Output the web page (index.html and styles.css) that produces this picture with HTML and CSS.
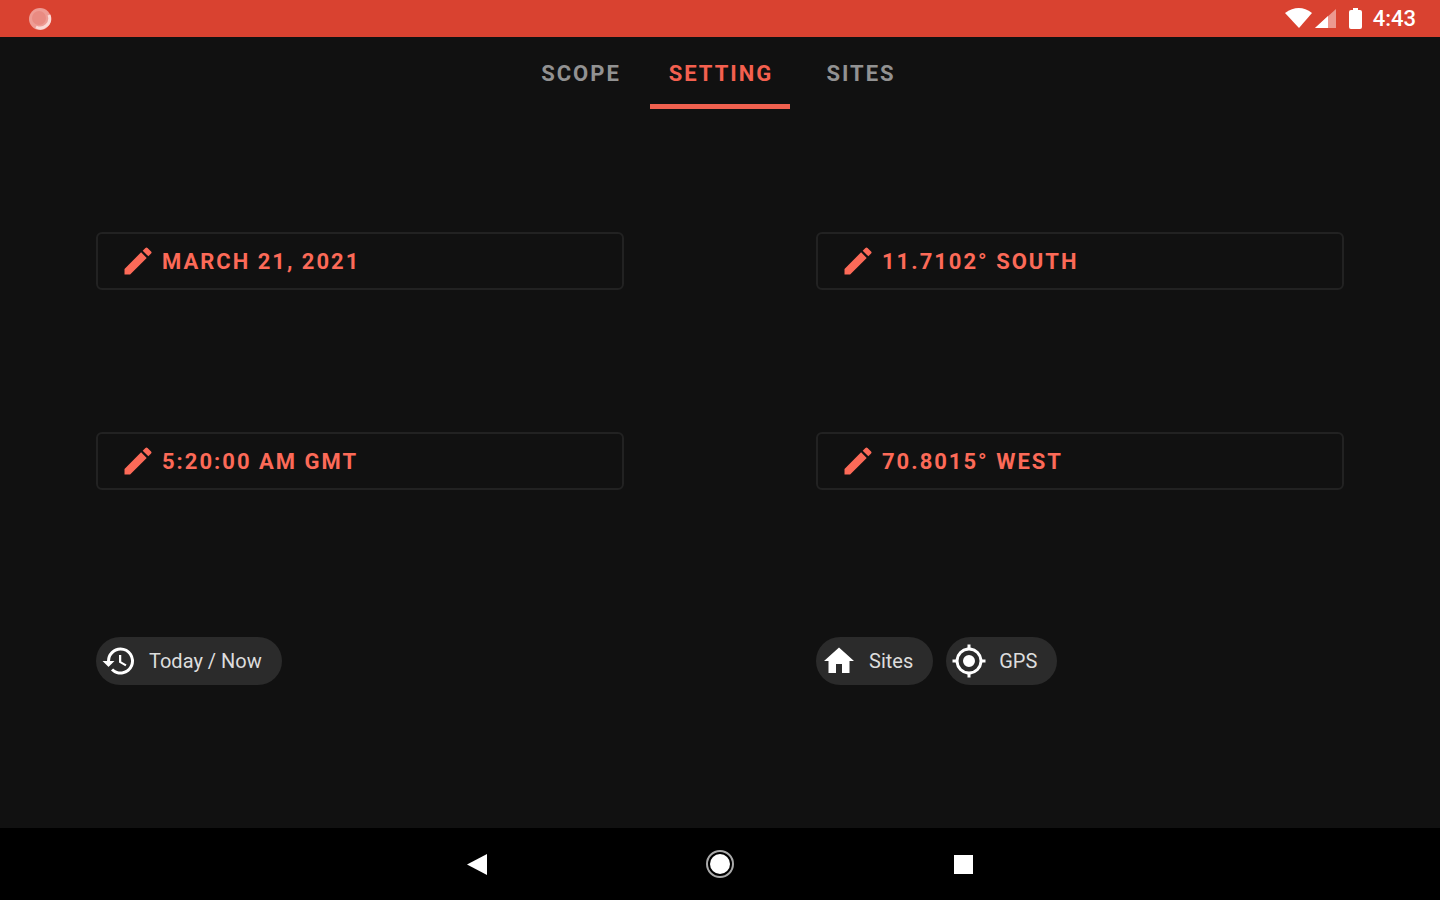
FILE: index.html
```html
<!DOCTYPE html>
<html lang="en">
<head>
<meta charset="utf-8">
<meta name="viewport" content="width=device-width, initial-scale=1">
<title>Setting</title>
<link rel="stylesheet" href="styles.css">
</head>
<body>
<svg class="sprite" aria-hidden="true">
  <symbol id="pencil" viewBox="0 0 24 24"><path d="M3 17.25V21h3.75L17.81 9.94l-3.75-3.75L3 17.25zM20.71 7.04a1 1 0 0 0 0-1.41l-2.34-2.34a1 1 0 0 0-1.41 0l-1.83 1.83 3.75 3.75 1.83-1.83z"/></symbol>
  <symbol id="history" viewBox="0 0 24 24"><path d="M13 3a9 9 0 0 0-9 9H1l3.89 3.89.07.14L9 12H6a7 7 0 1 1 2.06 4.94l-1.42 1.42A9 9 0 1 0 13 3zm-1 5v5l4.28 2.54.72-1.21-3.5-2.08V8H12z"/></symbol>
  <symbol id="home" viewBox="0 0 24 24"><path d="M10 20v-6h4v6h5v-8h3L12 3 2 12h3v8z"/></symbol>
  <symbol id="gps" viewBox="0 0 24 24"><path d="M12 8a4 4 0 1 0 0 8 4 4 0 0 0 0-8zm8.94 3A8.99 8.99 0 0 0 13 3.06V1h-2v2.06A8.99 8.99 0 0 0 3.06 11H1v2h2.06A8.99 8.99 0 0 0 11 20.94V23h2v-2.06A8.99 8.99 0 0 0 20.94 13H23v-2h-2.06zM12 19a7 7 0 1 1 0-14 7 7 0 0 1 0 14z"/></symbol>
</svg>
<header class="status">
  <svg class="record" viewBox="0 0 24 24" aria-hidden="true"><circle cx="12" cy="12" r="11" fill="#ee9c94"/><path d="M21 8a9.500 9.500 0 0 1-13 12" fill="none" stroke="#fbd9d5" stroke-width="3"/><circle cx="11" cy="11" r="7" fill="#e98b82"/></svg>
  <div class="status-icons">
    <svg class="wifi" viewBox="0 0 28 22" aria-hidden="true"><path d="M0 5Q14-5 27 5L14 20z" fill="#fff"/></svg>
    <svg class="signal" viewBox="0 0 22 20" aria-hidden="true"><path d="M21 0v19H0z" fill="#ec9990"/><path d="M13 7v12H0z" fill="#fff"/></svg>
    <svg class="battery" viewBox="0 0 14 22" aria-hidden="true"><path d="M4 0h5v2h2q2 0 2 2v15q0 2-2 2H2q-2 0-2-2V4q0-2 2-2h2z" fill="#fff"/></svg>
    <time class="clock">4:43</time>
  </div>
</header>
<nav class="tabs">
  <button class="tab" type="button">SCOPE</button>
  <button class="tab active" type="button" aria-current="page">SETTING</button>
  <button class="tab" type="button">SITES</button>
</nav>
<main class="settings">
  <button class="field" type="button"><svg class="pencil" aria-hidden="true"><use href="#pencil"/></svg>MARCH 21, 2021</button>
  <button class="field" type="button"><svg class="pencil" aria-hidden="true"><use href="#pencil"/></svg>11.7102° SOUTH</button>
  <button class="field" type="button"><svg class="pencil" aria-hidden="true"><use href="#pencil"/></svg>5:20:00 AM GMT</button>
  <button class="field" type="button"><svg class="pencil" aria-hidden="true"><use href="#pencil"/></svg>70.8015° WEST</button>
  <div class="chips">
    <button class="chip" type="button"><svg class="chip-icon" aria-hidden="true"><use href="#history"/></svg>Today / Now</button>
  </div>
  <div class="chips">
    <button class="chip" type="button"><svg class="chip-icon" aria-hidden="true"><use href="#home"/></svg>Sites</button>
    <button class="chip" type="button"><svg class="chip-icon" aria-hidden="true"><use href="#gps"/></svg>GPS</button>
  </div>
</main>
<footer class="navbar">
  <button class="nav-button" type="button" aria-label="Back"><svg class="nav-icon" viewBox="0 0 32 32"><path d="M6 16.500 26 6v21z"/></svg></button>
  <button class="nav-button" type="button" aria-label="Home"><svg class="nav-icon" viewBox="0 0 32 32"><circle cx="16" cy="16" r="13" fill="none" stroke="#aaa" stroke-width="2"/><circle cx="16" cy="16" r="10"/></svg></button>
  <button class="nav-button" type="button" aria-label="Recent apps"><svg class="nav-icon" viewBox="0 0 32 32"><rect x="7" y="7" width="19" height="19"/></svg></button>
</footer>
</body>
</html>
```
FILE: styles.css
```css
* { box-sizing: border-box; }

body {
  margin: 0;
  min-height: 100vh;
  display: flex;
  flex-direction: column;
  background: #111;
  color: #ddd;
  font-family: Roboto, sans-serif;
  font-size: 22px;
}

button {
  margin: 0;
  border: 0;
  background: none;
  color: inherit;
  font: inherit;
  cursor: pointer;
}

svg { flex: none; fill: currentColor; }

.sprite { position: absolute; width: 0; height: 0; }

.status {
  display: flex;
  align-items: center;
  justify-content: space-between;
  height: 37px;
  padding: 0 24px 0 28px;
  background: #d94230;
  color: #fff;
}

.record { width: 24px; height: 24px; }

.status-icons { display: flex; align-items: center; }

.wifi { width: 28px; height: 22px; }
.signal { width: 22px; height: 20px; margin-left: 2px; }
.battery { width: 14px; height: 22px; margin: 0 10px 0 12px; }
.clock { font-weight: 500; }

.tabs {
  display: grid;
  grid-template-columns: repeat(3, 140px);
  justify-content: center;
}

.tab {
  height: 72px;
  padding: 5px 0 0 2px;
  border-bottom: 5px solid transparent;
  color: #929292;
  font-weight: 700;
  letter-spacing: 2px;
}

.tab.active { border-color: #f0614f; color: #f4604f; }

.settings {
  flex: 1;
  display: grid;
  grid-template-columns: 1fr 1fr;
  grid-template-rows: repeat(3, 1fr);
  align-items: center;
  column-gap: 192px;
  padding: 52px 96px 67px;
}

.field {
  display: flex;
  align-items: center;
  gap: 6px;
  height: 58px;
  padding: 0 22px;
  border: 2px solid #222;
  border-radius: 6px;
  color: #fc6a58;
  font-weight: 700;
  letter-spacing: 2px;
}

.pencil { width: 36px; height: 36px; }

.chips { display: flex; gap: 13px; }

.chip {
  display: flex;
  align-items: center;
  gap: 12px;
  height: 48px;
  padding: 0 20px 0 5px;
  border-radius: 24px;
  background: #2b2b2b;
  font-size: 20px;
}

.chip-icon { width: 36px; height: 36px; color: #fff; }

.navbar {
  display: flex;
  align-items: center;
  justify-content: center;
  gap: 210px;
  height: 72px;
  background: #000;
  color: #fff;
}

.nav-button { padding: 0; width: 33px; height: 32px; }
.nav-icon { display: block; width: 32px; height: 32px; }
```
